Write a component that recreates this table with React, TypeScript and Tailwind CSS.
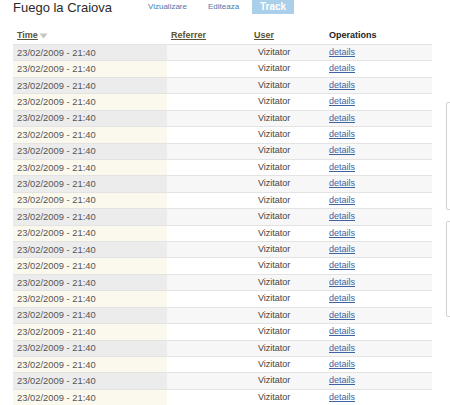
import React from "react";

const rows = Array.from({ length: 22 }, (_, i) => i);

export default function App() {
  return (
    <div
      className="w-[450px] h-[405px] overflow-hidden bg-white text-[#444]"
      style={{ fontFamily: '"Liberation Sans", Arial, sans-serif' }}
    >
      {/* Title bar */}
      <div className="flex items-start h-[28px]">
        <div className="ml-[13px] w-[135px] text-[13px] leading-[15px] text-[#2a2a2a]">
          Fuego la Craiova
        </div>
        <div className="flex items-start">
          <span className="text-[8px] leading-[14px] text-[#4a78ad]">Vizualizare</span>
          <span className="ml-[21px] text-[8px] leading-[14px] text-[#4a78ad]">Editeaza</span>
          <span className="ml-[13px] w-[42px] h-[14px] bg-[#a9cfea] text-white font-bold text-[10px] leading-[14px] text-center">
            Track
          </span>
        </div>
      </div>

      <div className="flex items-start">
        {/* Table */}
        <div className="ml-[13px] w-[419px]">
          <div className="flex h-[16px] items-center text-[9px] font-bold">
            <div className="w-[154px] pl-[4px] flex items-center">
              <span className="underline text-[#5b5236]">Time</span>
              <svg width="9" height="6" viewBox="0 0 9 6" className="ml-[1px]">
                <path d="M0.5 0.5 L8.5 0.5 L4.5 5.5 Z" fill="#c4c4c4" />
              </svg>
            </div>
            <div className="w-[83px] pl-[4px]">
              <span className="underline text-[#5b5236]">Referrer</span>
            </div>
            <div className="w-[75px] pl-[4px]">
              <span className="underline text-[#5b5236]">User</span>
            </div>
            <div className="w-[107px] pl-[4px] text-[#222]">Operations</div>
          </div>
          {rows.map((i) => {
            const even = i % 2 === 0;
            return (
              <div
                key={i}
                className={`flex h-[16.43px] border-t border-[#e3e3e3] text-[9px] ${even ? "bg-[#f7f7f7]" : "bg-white"}`}
              >
                <div
                  className={`w-[154px] pl-[4px] flex items-center text-[9.4px] text-[#555] ${even ? "bg-[#ececec]" : "bg-[#fbf9ee]"}`}
                >
                  23/02/2009 - 21:40
                </div>
                <div className="w-[83px]" />
                <div className="w-[75px] pl-[8px] flex items-center text-[#444]">Vizitator</div>
                <div className="w-[107px] pl-[4px] flex items-center">
                  <span className="underline text-[#3d64a0]">details</span>
                </div>
              </div>
            );
          })}
        </div>

        {/* Sidebar boxes */}
        <div className="ml-[14px] pt-[74px] flex flex-col gap-[11px] shrink-0">
          <div className="w-[60px] h-[108px] border border-[#d2d2d2] rounded-[2px] bg-white" />
          <div className="w-[60px] h-[96px] border border-[#d2d2d2] rounded-[2px] bg-white" />
        </div>
      </div>
    </div>
  );
}
